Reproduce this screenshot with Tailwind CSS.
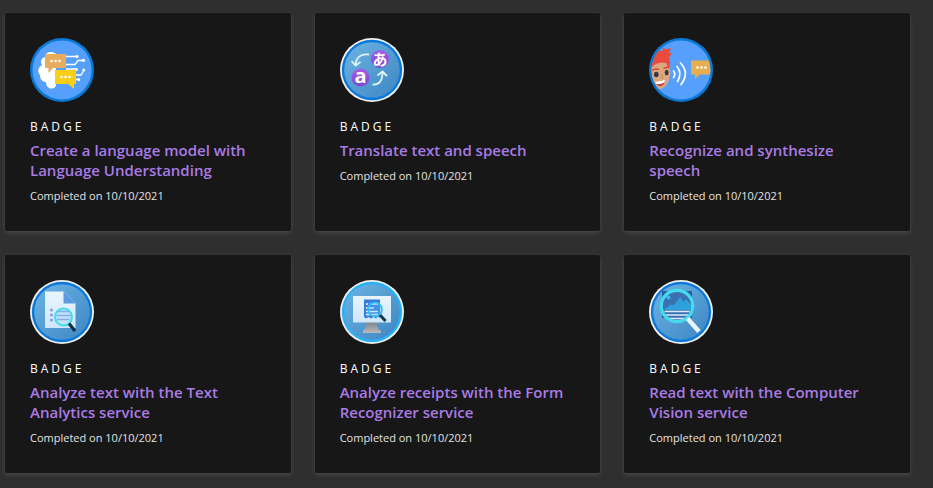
<!DOCTYPE html>
<html lang="en">
<head>
<meta charset="utf-8">
<meta name="viewport" content="width=device-width, initial-scale=1">
<title>Badges</title>
<script src="https://cdn.jsdelivr.net/npm/@tailwindcss/browser@4"></script>
</head>
<body class="min-h-screen bg-[#2f2f2f] font-['Segoe_UI','Open_Sans',sans-serif] text-[#e3e3e3]">
<svg class="absolute size-0" aria-hidden="true">
  <defs>
    <linearGradient id="disc" x1="0" y1="0" x2="1" y2="1"><stop offset="0" stop-color="#6db3e3"/><stop offset="1" stop-color="#3c86c2"/></linearGradient>
    <linearGradient id="violet" x1="0" y1="0" x2="0" y2="1"><stop offset="0" stop-color="#a95bea"/><stop offset="1" stop-color="#7f45cf"/></linearGradient>
    <linearGradient id="paper" x1="0" y1="0" x2="0" y2="1"><stop offset="0" stop-color="#e9f5fd"/><stop offset="1" stop-color="#cfe6fb"/></linearGradient>
    <linearGradient id="stand" x1="0" y1="0" x2="0" y2="1"><stop offset="0" stop-color="#7f8287"/><stop offset="1" stop-color="#b9bbbe"/></linearGradient>
    <clipPath id="inner"><circle cx="32" cy="32" r="29.5"/></clipPath>
  </defs>
</svg>
<main class="grid grid-cols-3 gap-6 pt-[13px] pr-[23px] pb-[15px] pl-[5px]">

  <article class="rounded-xs bg-[#171717] px-[25px] pt-[25px] pb-[27px] shadow-[0_2px_4px_#484848,0_0_2px_#3c3c3c]">
    <svg class="size-16" viewBox="0 0 64 64" aria-hidden="true">
      <circle cx="32" cy="32" r="32" fill="#0b78d4"/><circle cx="32" cy="32" r="29.5" fill="#56a0fb"/>
      <path d="M25 15.500C20 12 15 15 15 19C11 20 10 24 12 27C8 29 7 34 10 37C10 41 12 44 16 44C16 50 22 53 26 48V15z" fill="#fff"/>
      <g fill="none" stroke="#fff" stroke-width="1.300"><path d="M36 18.500H46M36 26.500H45L48 22.500H53M36 31H46M46 37H51L53.500 33M46 41.500H48"/></g>
      <g fill="#fff"><circle cx="47" cy="18.500" r="1.600"/><circle cx="53.500" cy="22.300" r="1.600"/><circle cx="46.500" cy="31.500" r="1.500"/><circle cx="53.700" cy="32" r="1.600"/><circle cx="48.700" cy="41.500" r="1.500"/></g>
      <path d="M15 16H36V30H23L18.500 35V30H15z" fill="#e6ae5c"/>
      <path d="M25 32H46V46H44V51L38 46H25z" fill="#f8cf16"/>
      <g fill="#fff"><circle cx="21.500" cy="23" r="1.300"/><circle cx="25.500" cy="23" r="1.300"/><circle cx="29.500" cy="23" r="1.300"/><circle cx="31.500" cy="39" r="1.300"/><circle cx="35.500" cy="39" r="1.300"/><circle cx="39.500" cy="39" r="1.300"/></g>
    </svg>
    <p class="mt-[17px] text-xs leading-4 tracking-[3px] text-white">BADGE</p>
    <h3 class="mt-[5px] text-[15px] leading-5 font-semibold"><a href="#" class="text-[#a97be4]">Create a language model with Language Understanding</a></h3>
    <p class="mt-2 text-[11px] leading-4">Completed on 10/10/2021</p>
  </article>

  <article class="rounded-xs bg-[#171717] px-[25px] pt-[25px] pb-[27px] shadow-[0_2px_4px_#484848,0_0_2px_#3c3c3c]">
    <svg class="size-16" viewBox="0 0 64 64" aria-hidden="true">
      <circle cx="32" cy="32" r="32" fill="#f1f1f1"/><circle cx="32" cy="32" r="30.200" fill="#0b78dc"/><circle cx="32" cy="32" r="27.800" fill="url(#disc)"/>
      <circle cx="40" cy="21" r="9" fill="url(#violet)"/><circle cx="20.500" cy="39.500" r="9" fill="url(#violet)"/>
      <text x="40" y="26.500" text-anchor="middle" font-family="Noto Sans CJK JP, sans-serif" font-size="15" font-weight="700" fill="#fff">あ</text>
      <text x="20.500" y="45" text-anchor="middle" font-family="Open Sans, sans-serif" font-size="20" font-weight="700" fill="#fff">a</text>
      <g fill="none" stroke="#dff5fd" stroke-width="1.800"><path d="M29 16.500C21 15.500 16 19 15.500 27M11.500 23L15.500 27.500L20.500 24"/><path d="M32.500 46.500C39 47 42.500 43 42.500 34M37.500 37.500L42.500 33.500L47 38"/></g>
    </svg>
    <p class="mt-[17px] text-xs leading-4 tracking-[3px] text-white">BADGE</p>
    <h3 class="mt-[5px] text-[15px] leading-5 font-semibold"><a href="#" class="text-[#a97be4]">Translate text and speech</a></h3>
    <p class="mt-2 text-[11px] leading-4">Completed on 10/10/2021</p>
  </article>

  <article class="rounded-xs bg-[#171717] px-[25px] pt-[25px] pb-[27px] shadow-[0_2px_4px_#484848,0_0_2px_#3c3c3c]">
    <svg class="size-16" viewBox="0 0 64 64" aria-hidden="true">
      <circle cx="32" cy="32" r="32" fill="#0b78d4"/><circle cx="32" cy="32" r="29.500" fill="#56a0fb"/>
      <g clip-path="url(#inner)">
        <path d="M0 27L19 23L20.500 31Q22.500 36 20.500 38Q20 46 14 50Q7 53 0 46z" fill="#dda77e"/>
        <path d="M0 29V20L5 17Q8 11 14 13L13 10Q17 12 22 10L20 15L23 15.500L20 19Q22 24 20 31L17 25Q9 23 3 29z" fill="#e84c3d"/>
        <path d="M3 32.500Q6 30 10 31.500M14.500 30.500Q17 28.500 20 29.500" fill="none" stroke="#d8432f" stroke-width="1.500"/>
        <ellipse cx="7.300" cy="36.500" rx="2.300" ry="2.800" fill="#303b43"/><ellipse cx="17.700" cy="34.500" rx="2" ry="2.700" fill="#303b43"/>
        <path d="M12.500 36L14 40L11.500 40.500" fill="none" stroke="#c68763"/>
        <path d="M6 43.500Q11 44 16 41.500Q16 48 11 48Q7 48 6 43.500z" fill="#c93237"/><path d="M6 43.500Q11 44 16 41.500L15.500 44.500Q11 47 7 46z" fill="#fff"/>
        <path d="M42 22.500H62V36.500H51L46 41V36.500H42z" fill="#e6ae4e"/>
      </g>
      <g fill="none" stroke="#fff" stroke-width="1.700" stroke-linecap="round"><path d="M24.500 33Q27 36 24.500 39.500M28 28.500Q33.500 35 28.500 43.500M31.500 25Q41 35 32 46.500"/></g>
      <g fill="#fff"><circle cx="48.500" cy="29.500" r="1.300"/><circle cx="52.500" cy="29.500" r="1.300"/><circle cx="56.500" cy="29.500" r="1.300"/></g>
    </svg>
    <p class="mt-[17px] text-xs leading-4 tracking-[3px] text-white">BADGE</p>
    <h3 class="mt-[5px] text-[15px] leading-5 font-semibold"><a href="#" class="text-[#a97be4]">Recognize and synthesize speech</a></h3>
    <p class="mt-2 text-[11px] leading-4">Completed on 10/10/2021</p>
  </article>

  <article class="rounded-xs bg-[#171717] px-[25px] pt-[25px] pb-[27px] shadow-[0_2px_4px_#484848,0_0_2px_#3c3c3c]">
    <svg class="size-16" viewBox="0 0 64 64" aria-hidden="true">
      <circle cx="32" cy="32" r="32" fill="#f1f1f1"/><circle cx="32" cy="32" r="30.200" fill="#0b78dc"/><circle cx="32" cy="32" r="27.800" fill="url(#disc)"/>
      <path d="M15 11.500H33.500L45.500 23.500V48H15z" fill="url(#paper)"/><path d="M33.500 11.500L45.500 23.500H33.500z" fill="#5b9ae3"/>
      <g fill="#7e9fee"><circle cx="21.500" cy="30" r="1.500"/><circle cx="21.500" cy="35" r="1.500"/><circle cx="21.500" cy="40" r="1.500"/></g>
      <circle cx="33.500" cy="37" r="8.500" fill="#bfe3f7"/>
      <path d="M27 31.500H40M26.500 35.500H41M27 39.500H40" stroke="#8aabee" stroke-width="1.500"/>
      <circle cx="33.500" cy="37" r="8.500" fill="none" stroke="#42dcec" stroke-width="2"/>
      <path d="M39 43.500L45 51" stroke="#102f45" stroke-width="3.200"/>
    </svg>
    <p class="mt-[17px] text-xs leading-4 tracking-[3px] text-white">BADGE</p>
    <h3 class="mt-[5px] text-[15px] leading-5 font-semibold"><a href="#" class="text-[#a97be4]">Analyze text with the Text Analytics service</a></h3>
    <p class="mt-2 text-[11px] leading-4">Completed on 10/10/2021</p>
  </article>

  <article class="rounded-xs bg-[#171717] px-[25px] pt-[25px] pb-[27px] shadow-[0_2px_4px_#484848,0_0_2px_#3c3c3c]">
    <svg class="size-16" viewBox="0 0 64 64" aria-hidden="true">
      <circle cx="32" cy="32" r="32" fill="#f1f1f1"/><circle cx="32" cy="32" r="30.200" fill="#27b2f4"/><circle cx="32" cy="32" r="27.800" fill="url(#disc)"/>
      <path d="M26 42H37C37 47 38 50 41 50.500V53H23V50.500C26 49 26 46 26 42z" fill="url(#stand)"/>
      <rect x="13" y="16" width="38" height="26.500" fill="url(#paper)"/>
      <path d="M24 19.500H40V38L38 36.500L36 38.500L33.500 37L31 38.500L28.500 37L26 38.500L24 37z" fill="#367ddd"/>
      <path d="M26 24H28M29.500 24H38M26 28H34M26 31.500H38M26 34.500H38" stroke="#f3faff" stroke-width="1.400"/>
      <circle cx="35" cy="29.500" r="7" fill="#59b9ef" fill-opacity=".35" stroke="#32bff0" stroke-width="1.700"/>
      <path d="M40 35L45.500 41" stroke="#103650" stroke-width="3"/>
    </svg>
    <p class="mt-[17px] text-xs leading-4 tracking-[3px] text-white">BADGE</p>
    <h3 class="mt-[5px] text-[15px] leading-5 font-semibold"><a href="#" class="text-[#a97be4]">Analyze receipts with the Form Recognizer service</a></h3>
    <p class="mt-2 text-[11px] leading-4">Completed on 10/10/2021</p>
  </article>

  <article class="rounded-xs bg-[#171717] px-[25px] pt-[25px] pb-[27px] shadow-[0_2px_4px_#484848,0_0_2px_#3c3c3c]">
    <svg class="size-16" viewBox="0 0 64 64" aria-hidden="true">
      <circle cx="32" cy="32" r="32" fill="#f1f1f1"/><circle cx="32" cy="32" r="30.200" fill="#0b78dc"/><circle cx="32" cy="32" r="27.800" fill="url(#disc)"/>
      <rect x="13" y="11" width="30" height="27" fill="#285f9d"/>
      <circle cx="28" cy="26" r="15.500" fill="#3c70b0"/><circle cx="19.500" cy="17.500" r="2" fill="#42b8ea"/>
      <path d="M15 30L21 25L25 25L31 17L34.500 22L37 19L42 25V30z" fill="#2da1dc"/>
      <path d="M15.500 31.500H40.500M16.500 35H39.500M19 38.500H37" stroke="#dcebf8" stroke-width="1.700"/>
      <circle cx="28" cy="26" r="15.700" fill="none" stroke="#43dbed" stroke-width="3.200"/>
      <path d="M38.500 38.500L50 51.500" stroke="#eaf4fb" stroke-width="4.500"/>
    </svg>
    <p class="mt-[17px] text-xs leading-4 tracking-[3px] text-white">BADGE</p>
    <h3 class="mt-[5px] text-[15px] leading-5 font-semibold"><a href="#" class="text-[#a97be4]">Read text with the Computer Vision service</a></h3>
    <p class="mt-2 text-[11px] leading-4">Completed on 10/10/2021</p>
  </article>
</main>
</body>
</html>
